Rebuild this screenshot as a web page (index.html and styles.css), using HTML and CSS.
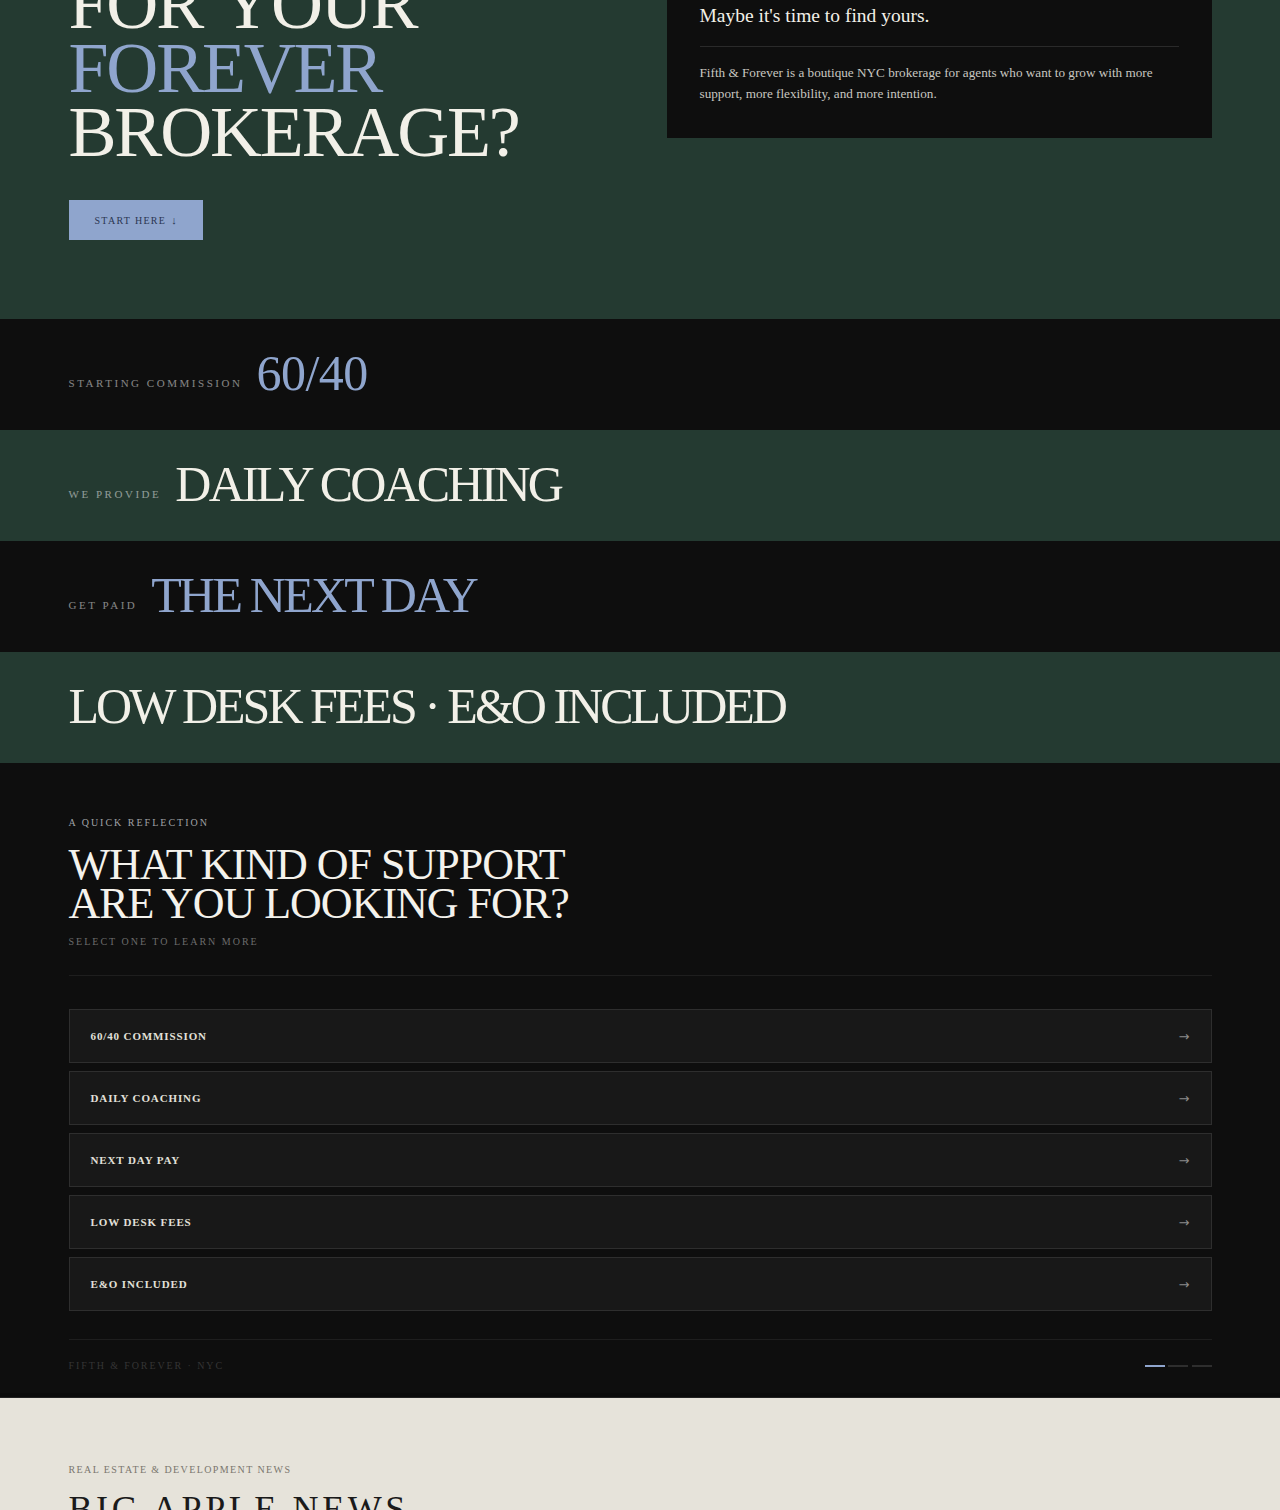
FILE: index.html
```html
<!DOCTYPE html>
<html lang="en">
<head>
<meta charset="utf-8">
<title>Fifth &amp; Forever</title>
<link rel="stylesheet" href="styles.css">
</head>
<body>
<section class="hero">
  <div class="container hero-grid">
    <div class="hero-left">
      <h1 class="hero-title">
        <span class="line">FOR YOUR</span>
        <span class="line accent">FOREVER</span>
        <span class="line">BROKERAGE?</span>
      </h1>
      <a class="btn" href="#support">START HERE <span class="btn-arrow">&#8595;</span></a>
    </div>
    <aside class="hero-card">
      <p class="card-lead">Maybe it's time to find yours.</p>
      <hr class="card-rule">
      <p class="card-text">Fifth &amp; Forever is a boutique NYC brokerage for agents who want to grow with more support, more flexibility, and more intention.</p>
    </aside>
  </div>
</section>

<section class="band band-dark">
  <div class="container band-row">
    <span class="band-label">STARTING COMMISSION</span>
    <span class="band-big accent num">60/40</span>
  </div>
</section>
<section class="band band-green">
  <div class="container band-row">
    <span class="band-label">WE PROVIDE</span>
    <span class="band-big">DAILY COACHING</span>
  </div>
</section>
<section class="band band-dark">
  <div class="container band-row">
    <span class="band-label">GET PAID</span>
    <span class="band-big accent">THE NEXT DAY</span>
  </div>
</section>
<section class="band band-green">
  <div class="container band-row">
    <span class="band-big wide">LOW DESK FEES &middot; E&amp;O INCLUDED</span>
  </div>
</section>

<section class="reflect" id="support">
  <div class="container">
    <p class="eyebrow">A QUICK REFLECTION</p>
    <h2 class="reflect-title">WHAT KIND OF SUPPORT<br>ARE YOU LOOKING FOR?</h2>
    <p class="reflect-sub">SELECT ONE TO LEARN MORE</p>
    <hr class="rule">
    <ul class="options">
      <li class="option"><span>60/40 COMMISSION</span><span class="option-arrow">&#8594;</span></li>
      <li class="option"><span>DAILY COACHING</span><span class="option-arrow">&#8594;</span></li>
      <li class="option"><span>NEXT DAY PAY</span><span class="option-arrow">&#8594;</span></li>
      <li class="option"><span>LOW DESK FEES</span><span class="option-arrow">&#8594;</span></li>
      <li class="option"><span>E&amp;O INCLUDED</span><span class="option-arrow">&#8594;</span></li>
    </ul>
    <hr class="rule rule-bottom">
    <div class="reflect-foot">
      <span class="foot-brand">FIFTH &amp; FOREVER &middot; NYC</span>
      <span class="dots"><span class="dash on"></span><span class="dash"></span><span class="dash"></span></span>
    </div>
  </div>
</section>

<section class="news">
  <div class="container">
    <p class="news-eyebrow">REAL ESTATE &amp; DEVELOPMENT NEWS</p>
    <h2 class="news-title">BIG APPLE NEWS</h2>
  </div>
</section>
</body>
</html>
```

FILE: styles.css
```css
* { box-sizing: border-box; }

html, body {
  margin: 0;
  padding: 0;
}

body {
  font-family: "Liberation Serif", "Times New Roman", serif;
  background: #0e0e0e;
  color: #f2f0e8;
}

.container {
  width: 1143px;
  margin: 0 auto;
}

/* HERO */
.hero {
  background: #243a31;
  margin-top: -108px;
  padding: 80px 0 79px;
}

.hero-grid {
  display: grid;
  grid-template-columns: 1fr 545px;
  column-gap: 53px;
  align-items: start;
}

.hero-title {
  margin: 0;
  font-weight: 400;
  font-size: 72px;
  line-height: 64px;
  letter-spacing: -2.2px;
  word-spacing: 6px;
  color: #f2f0e8;
}

.hero-title .line { display: block; }

.accent { color: #8fa5cd; }

.btn {
  display: inline-flex;
  align-items: center;
  gap: 5px;
  margin-top: 36px;
  height: 40px;
  padding: 0 26px;
  background: #8fa5cd;
  color: #2b3652;
  text-decoration: none;
  font-size: 10px;
  letter-spacing: 0.13em;
}

.btn-arrow { font-size: 11px; font-weight: 700; letter-spacing: 0; }

.hero-card {
  background: #0e0e0e;
  padding: 30px 33px 34px;
}

.card-lead {
  margin: 0;
  font-size: 19.5px;
  line-height: 27px;
  color: #f2f0e8;
}

.card-rule {
  border: 0;
  border-top: 1px solid #2a2a2a;
  margin: 17px 0 16px;
}

.card-text {
  margin: 0;
  font-size: 13.2px;
  line-height: 20.5px;
  color: #c9c7c0;
}

/* BANDS */
.band {
  padding: 28.5px 0 32.5px;
}

.band-dark { background: #0e0e0e; }
.band-green { background: #243a31; }

.band-row {
  display: flex;
  align-items: flex-end;
  gap: 14px;
}

.band-label {
  font-size: 11px;
  line-height: 14px;
  letter-spacing: 0.23em;
  color: rgba(255, 255, 255, 0.5);
  margin-bottom: 8px;
}

.band-big {
  font-size: 50px;
  line-height: 50px;
  letter-spacing: -2.8px;
  color: #f2f0e8;
}

.band-big.accent { color: #8fa5cd; }
.band-big.num { letter-spacing: -0.5px; }
.band-big.wide { letter-spacing: -3px; }

/* REFLECTION */
.reflect {
  background: #0e0e0e;
  padding: 53px 0 24px;
  border-bottom: 1px solid #222;
  box-shadow: inset 0 -4px 0 #0b0b0b;
}

.eyebrow {
  margin: 0 0 15px;
  font-size: 10px;
  line-height: 14px;
  letter-spacing: 0.2em;
  color: #a0a2a6;
}

.reflect-title {
  margin: 0;
  font-weight: 400;
  font-size: 44px;
  line-height: 39px;
  letter-spacing: -1px;
  color: #f4f2ec;
}

.reflect-sub {
  margin: 12px 0 0;
  font-size: 10px;
  line-height: 14px;
  letter-spacing: 0.2em;
  color: #6c6c6c;
}

.rule {
  border: 0;
  border-top: 1px solid #1e1e1e;
  margin: 26px 0 33px;
}

.rule-bottom { margin: 28px 0 19px; }

.options {
  list-style: none;
  margin: 0;
  padding: 0;
  display: flex;
  flex-direction: column;
  gap: 8px;
}

.option {
  display: flex;
  justify-content: space-between;
  align-items: center;
  height: 54px;
  padding: 0 21px;
  background: #181818;
  border: 1px solid #2e2e2e;
  font-size: 11px;
  font-weight: 700;
  letter-spacing: 0.08em;
  color: #e2e0da;
}

.option-arrow {
  font-family: "DejaVu Sans", sans-serif;
  font-weight: 400;
  font-size: 13px;
  letter-spacing: 0;
  color: #8a8a8a;
}

.reflect-foot {
  display: flex;
  justify-content: space-between;
  align-items: center;
  height: 14px;
}

.foot-brand {
  font-size: 10px;
  line-height: 14px;
  letter-spacing: 0.19em;
  color: #353535;
}

.dots {
  display: flex;
  gap: 3.5px;
}

.dash {
  width: 20px;
  height: 2px;
  background: #2e2e2e;
}

.dash.on { background: #8fa5cd; }

/* NEWS */
.news {
  background: #e6e3da;
  padding: 65px 0 120px;
}

.news-eyebrow {
  margin: 0 0 12px;
  font-size: 10px;
  line-height: 14px;
  letter-spacing: 0.14em;
  color: #7a766e;
}

.news-title {
  margin: 0;
  font-weight: 400;
  font-size: 36px;
  line-height: 40px;
  letter-spacing: 0.1em;
  color: #1a1a1a;
}
```
